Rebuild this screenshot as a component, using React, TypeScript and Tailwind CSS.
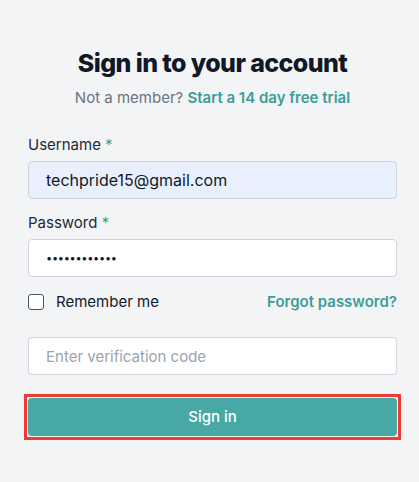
import { useState } from 'react'

export default function App() {
  const [remember, setRemember] = useState(false)

  return (
    <div
      className="min-h-screen bg-[#f3f4f6] pl-[28px] pr-[22px] pt-[47px]"
      style={{ fontFamily: 'Inter, "Noto Sans", sans-serif' }}
    >
      <h1 className="text-center text-[25px] font-extrabold leading-[32px] tracking-[-0.6px] text-[#111827]">
        Sign in to your account
      </h1>
      <p className="mt-[7px] text-center text-[15px] leading-[24px] text-[#6b7280]">
        Not a member?{' '}
        <a href="#" className="font-semibold text-[#3f9c98]">
          Start a 14 day free trial
        </a>
      </p>

      <form className="mt-[23px]" onSubmit={(e) => e.preventDefault()}>
        <label className="block text-[15px] leading-[24px] text-[#1f2937]">
          Username <span className="text-[#3f9c98]">*</span>
        </label>
        <input
          defaultValue="techpride15@gmail.com"
          className="mt-[4px] block h-[38px] w-full rounded-[4px] border border-[#d1d5db] bg-[#e8f0fe] px-[17px] text-[16px] text-[#111827] outline-none"
        />

        <label className="mt-[12px] block text-[15px] leading-[24px] text-[#1f2937]">
          Password <span className="text-[#3f9c98]">*</span>
        </label>
        <input
          type="password"
          defaultValue="techpride15!"
          className="mt-[4px] block h-[38px] w-full rounded-[4px] border border-[#d1d5db] bg-white px-[17px] text-[11px] tracking-[-0.3px] text-[#111827] outline-none"
        />

        <div className="mt-[10px] flex h-[30px] items-center justify-between">
          <label className="flex items-center gap-[12px] text-[15px] text-[#111827]">
            <input
              type="checkbox"
              checked={remember}
              onChange={(e) => setRemember(e.target.checked)}
              className="h-[16px] w-[16px] appearance-none rounded-[3px] border-[1.5px] border-[#4b5563] bg-white"
            />
            Remember me
          </label>
          <a href="#" className="text-[15px] font-semibold text-[#3f9c98]">
            Forgot password?
          </a>
        </div>

        <input
          placeholder="Enter verification code"
          className="mt-[20px] block h-[38px] w-full rounded-[4px] border border-[#d1d5db] bg-white px-[17px] text-[15px] text-[#111827] outline-none placeholder:text-[#9ca3af]"
        />

        <div className="-mx-[4px] mt-[19px] border-[3px] border-[#ef3b36] p-[1px]">
          <button
            type="submit"
            className="block h-[38px] w-full rounded-[4px] bg-[#47a8a6] text-[15px] font-medium text-white"
          >
            Sign in
          </button>
        </div>
      </form>
    </div>
  )
}
